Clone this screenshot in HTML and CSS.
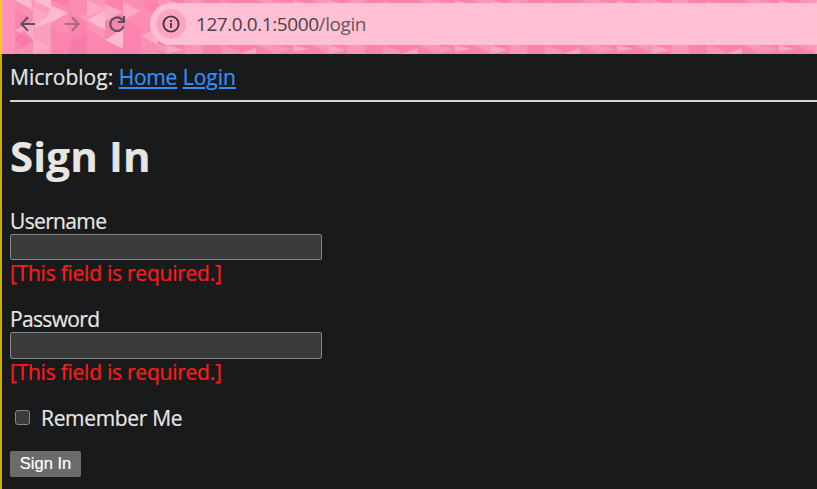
FILE: index.html
```html
<!DOCTYPE html>
<html lang="en">
<head>
<meta charset="utf-8">
<title>Sign In - Microblog</title>
<link rel="stylesheet" href="styles.css">
</head>
<body>
<div class="window">
  <header class="toolbar">
    <svg class="pattern" width="815" height="54" viewBox="2 0 815 54" aria-hidden="true">
      <defs>
        <pattern id="tri" width="162" height="9" patternUnits="userSpaceOnUse" x="5" y="45">
          <path fill="#fa83ac" d="M0 0h162v9H0z"/>
          <path fill="#fb94b6" d="M18 0h18v9H18zM54 0l18 6v3H54zM90 0h18v9zM108 0l18 4-18 5zM144 0h18v9z"/>
          <path fill="#fda5c0" d="M0 0l17 5-17 4zM72 9l17-6v6zM126 0l16 4-16 3z"/>
        </pattern>
      </defs>
      <path fill="#fb8db2" d="M0 0h817v54H0z"/>
      <path fill="url(#tri)" d="M158 0h659v54H158z"/>
      <path fill="#fb94b7" d="M2 0h13v54H2zM87 0h18v54H87z"/>
      <path fill="#fb9dbc" d="M33 0h18v54H33zM69 22l18-8v20z"/>
      <path fill="#fa84af" d="M15 10l18 10v22l-18 9zM51 27l18 8v19H51zM69 12l18 9v33H69zM105 0h18v54h-18zM123 20l18 9v25h-18zM141 0h17v20z"/>
      <path fill="#fda9c4" d="M33 8l18 9-18 9zM51 5l17 8-17 10zM33 39l18 8-18 7zM15 30l18-9v19zM87 0l18 9-18 8zM105 4l18 8-18 9zM105 40l18-12v21zM123 2l18 9-18 9zM141 36l17-9v18z"/>
      <path fill="#ffb9ce" d="M15 0h16l2 10-15-8zM33 0h18v9zM51 7l17 6-17 9-18 6 14-11zM87 20l18-10v20zM105 40l18-10v18z"/>
      <path fill="#f875a5" d="M69 43l18-10v21H69zM15 40l9-10 9 10-9 8zM51 0h18v8z" opacity=".65"/>
      <path fill="#f97ca9" d="M87 29l18 11v14H87z" opacity=".5"/>
    </svg>
    <nav class="controls">
      <svg width="16" height="16" viewBox="0 0 16 16" fill="none" stroke="#5b5156" stroke-width="2"><path d="M15 8H1.8M8 1.3L1.3 8 8 14.7"/></svg>
      <svg class="forward" width="16" height="16" viewBox="0 0 16 16" fill="none" stroke="#5b5156" stroke-width="2"><path d="M1 8h13.2M8 1.3L14.7 8 8 14.7"/></svg>
      <svg width="18" height="18" viewBox="0 0 18 18" fill="none" stroke="#5b5156" stroke-width="2.1"><path d="M15.6 11.2A6.8 6.8 0 1 1 14 4.5l1.8 2M16 1v6h-6"/></svg>
    </nav>
    <div class="address">
      <span class="info"><svg width="18" height="18" viewBox="0 0 18 18"><circle cx="9" cy="9" r="7.6" fill="none" stroke="#42383d" stroke-width="1.9"/><path fill="#42383d" d="M8.1 8h1.9v5H8.1zM8.1 5H10v1.9H8.1z"/></svg></span>
      <span class="url">127.0.0.1:5000<span class="path">/login</span></span>
    </div>
  </header>
  <main class="page">
    <div class="menu"><span class="brand">Microblog:</span> <a class="home" href="#">Home</a> <a class="login" href="#">Login</a></div>
    <hr>
    <h1>Sign In</h1>
    <form>
      <div class="field first">
        <label for="username">Username</label>
        <input id="username" type="text">
        <span class="error">[This field is required.]</span>
      </div>
      <div class="field">
        <label for="password">Password</label>
        <input id="password" type="password">
        <span class="error">[This field is required.]</span>
      </div>
      <div class="remember"><span class="box"></span><span>Remember Me</span></div>
      <button type="button">Sign In</button>
    </form>
  </main>
</div>
</body>
</html>
```
FILE: styles.css
```css
* { box-sizing: border-box; }
body { margin: 0; background: #191a1c; color: #e8e6e3; font: 21px/27px "Open Sans", sans-serif; overflow: hidden; }
.window { height: 489px; border-left: 2px solid #c9ae00; }
.toolbar { position: relative; height: 54px; margin-left: -2px; border-left: 2px solid #fcc626; display: flex; align-items: flex-start; padding-top: 3px; }
.pattern { position: absolute; left: 0; top: 0; }
.controls { position: relative; width: 148px; height: 42px; display: flex; align-items: center; gap: 28px; padding-left: 18px; }
.forward { opacity: .5; }
.address { position: relative; flex: 1; height: 42px; display: flex; align-items: center; background: #ffc0d3; border-radius: 21px 0 0 21px; padding-left: 6px; color: #4b4146; }
.info { width: 30px; height: 30px; border-radius: 50%; background: #ffa5c1; display: flex; align-items: center; justify-content: center; }
.url { margin-left: 10px; font-size: 19px; letter-spacing: -.43px; }
.path { color: #695860; }
.page { padding: 10px 0 0 8px; -webkit-text-stroke: .2px; }
.menu { height: 27px; white-space: nowrap; }
.home { letter-spacing: -.2px; }
a { color: #3391ff; text-decoration-thickness: 2px; text-underline-offset: 2px; }
hr { height: 2px; border: 0; margin: 9px 0 0; background: #d8d5d0; }
h1 { margin: 28px 0 0; font-size: 42px; line-height: 52px; letter-spacing: .15px; }
form { margin-top: 26px; }
.field { display: flex; flex-direction: column; align-items: flex-start; height: 98px; }
label { height: 26px; letter-spacing: -.65px; }
input { width: 312px; height: 27px; background: #3b3b3b; border: 1px solid #858585; border-radius: 2px; padding: 0; }
.first input { height: 26px; }
.error { color: #ff1a1a; letter-spacing: -.24px; }
.remember { height: 27px; display: flex; align-items: center; padding-left: 5px; margin-top: 1px; letter-spacing: -.32px; }
.box { width: 15px; height: 15px; border: 1px solid #858585; border-radius: 3px; background: #3b3b3b; margin: 0 11px 3px 0; }
button { display: block; margin-top: 19px; width: 71px; height: 26px; background: #6b6b6b; border: 0; border-radius: 2px; padding: 0 0 2px; color: #fff; font: 16.5px "Liberation Sans", sans-serif; }
```
